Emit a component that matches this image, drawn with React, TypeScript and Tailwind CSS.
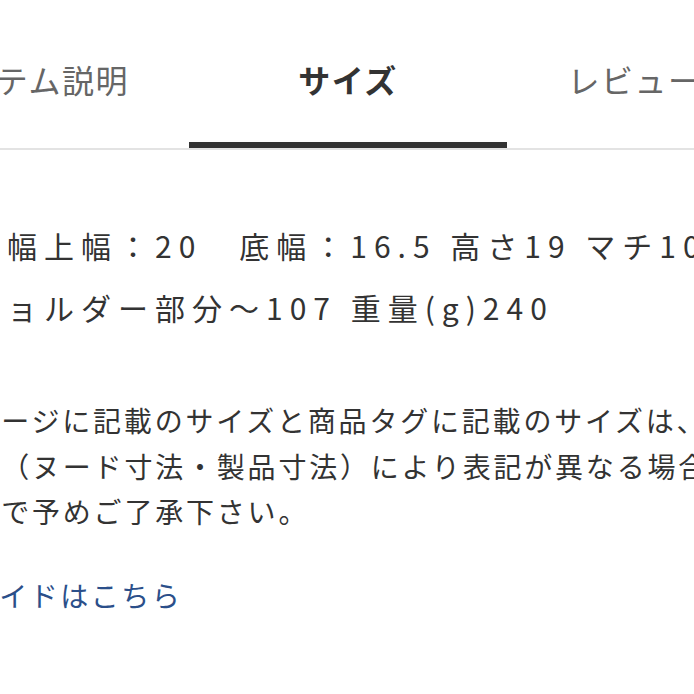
import React from 'react';

const tabs = [
  { label: 'アイテム説明', active: false },
  { label: 'サイズ', active: true },
  { label: 'レビュー(12)', active: false },
];

export default function App() {
  return (
    <div
      className="w-[694px] h-[694px] overflow-hidden bg-white text-[#333]"
      style={{ fontFamily: '"Noto Sans CJK JP", "Noto Sans", sans-serif' }}
    >
      {/* タブ */}
      <div className="border-b-2 border-[#e3e3e3]">
        <div className="flex -ml-[129px] w-[954px]">
          {tabs.map((t) => (
            <div
              key={t.label}
              className={
                'w-[318px] shrink-0 flex flex-col items-center pt-[61px] ' +
                (t.active ? 'border-b-[6px] border-[#333] pb-[45px]' : 'pb-[51px]')
              }
            >
              <span
                className={
                  'text-[32px] leading-[36px] tracking-[1.5px] whitespace-nowrap ' +
                  (t.active ? 'font-bold text-[#333]' : 'text-[#666]')
                }
              >
                {t.label}
              </span>
            </div>
          ))}
        </div>
      </div>

      {/* サイズ詳細 */}
      <div className="pt-[64px]">
        <p className="-ml-[30px] text-[30px] leading-[62px] tracking-[7px] whitespace-nowrap">
          横幅上幅：20　底幅：16.5 高さ19 マチ10 持ち手
          <br />
          ショルダー部分～107 重量(g)240
        </p>

        <p className="-ml-[122px] mt-[60px] text-[28px] leading-[45.5px] tracking-[2.8px] whitespace-nowrap">
          ※このページに記載のサイズと商品タグに記載のサイズは、
          <br />
          計測方法（ヌード寸法・製品寸法）により表記が異なる場合があ
          <br />
          りますので予めご了承下さい。
        </p>

        <a
          href="#"
          className="block -ml-[122px] mt-[37px] text-[28px] leading-[46px] tracking-[2.5px] text-[#2b4f8a] whitespace-nowrap"
        >
          サイズガイドはこちら
        </a>
      </div>
    </div>
  );
}
